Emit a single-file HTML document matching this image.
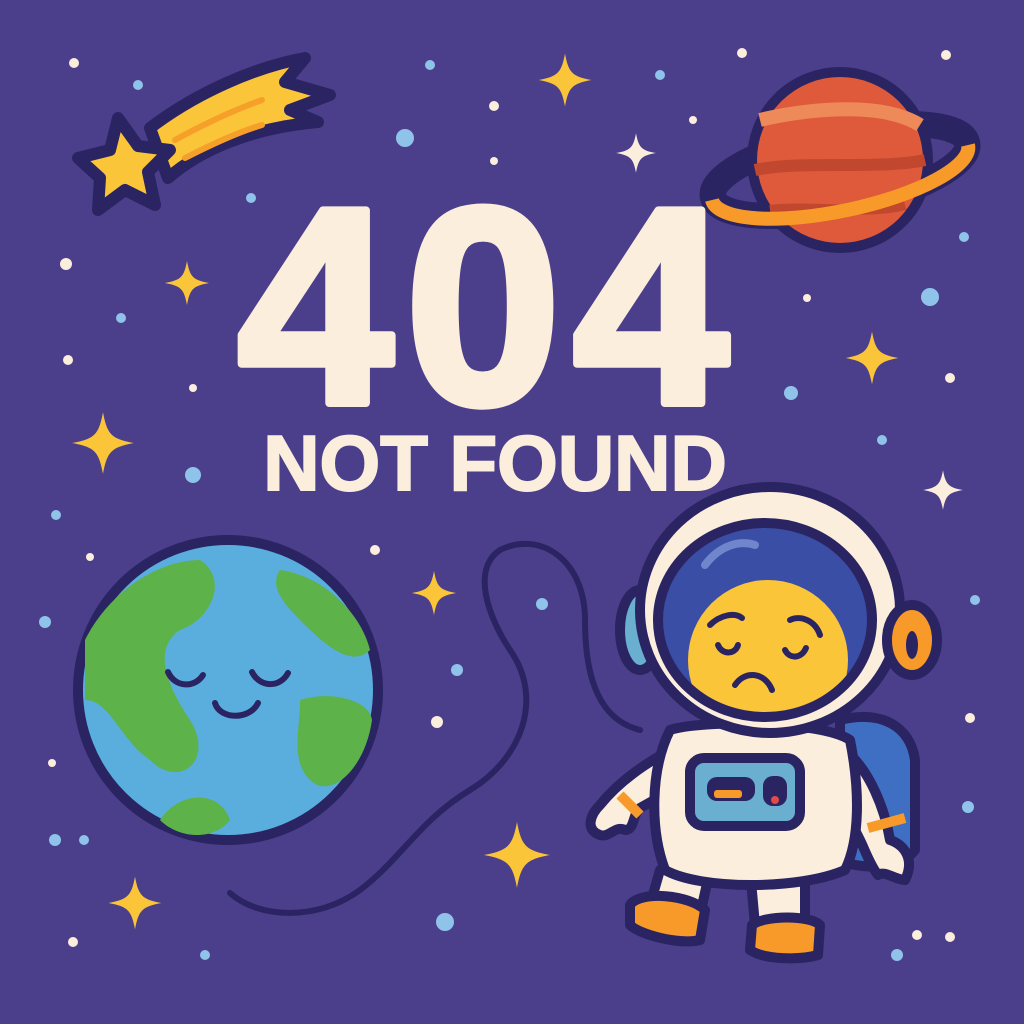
<!DOCTYPE html>
<html><head><meta charset="utf-8"><style>
html,body{margin:0;padding:0;background:#4b3f8b;}
svg{display:block}
</style></head><body>
<svg width="1024" height="1024" viewBox="0 0 1024 1024" xmlns="http://www.w3.org/2000/svg">
<defs>
<path id="sp" d="M0,-22 C3,-6 6,-3 22,0 C6,3 3,6 0,22 C-3,6 -6,3 -22,0 C-6,-3 -3,-6 0,-22Z"/>
</defs>
<rect width="1024" height="1024" fill="#4b3f8b"/>
<g fill="#8fc3ea">
<circle cx="138" cy="85" r="5"/><circle cx="430" cy="65" r="5"/><circle cx="405" cy="138" r="9"/><circle cx="660" cy="75" r="5"/>
<circle cx="251" cy="198" r="5"/><circle cx="121" cy="318" r="5"/><circle cx="930" cy="297" r="9"/><circle cx="964" cy="237" r="5"/>
<circle cx="193" cy="475" r="8"/><circle cx="56" cy="515" r="5"/><circle cx="791" cy="393" r="7"/><circle cx="882" cy="440" r="5"/>
<circle cx="542" cy="604" r="6"/><circle cx="457" cy="670" r="6"/><circle cx="45" cy="622" r="6"/><circle cx="975" cy="600" r="5"/>
<circle cx="55" cy="840" r="6"/><circle cx="968" cy="807" r="6"/><circle cx="445" cy="922" r="9"/><circle cx="897" cy="955" r="6"/><circle cx="205" cy="955" r="5"/>
<circle cx="84" cy="840" r="5"/>
</g>
<g fill="#fbeedd">
<circle cx="74" cy="63" r="5"/><circle cx="494" cy="106" r="5"/><circle cx="742" cy="53" r="5"/><circle cx="946" cy="55" r="5"/>
<circle cx="494" cy="161" r="4"/><circle cx="693" cy="120" r="4"/><circle cx="66" cy="264" r="6"/><circle cx="807" cy="298" r="4"/>
<circle cx="68" cy="360" r="5"/><circle cx="193" cy="388" r="4"/><circle cx="950" cy="378" r="5"/><circle cx="375" cy="550" r="5"/>
<circle cx="90" cy="557" r="4"/><circle cx="437" cy="722" r="6"/><circle cx="52" cy="763" r="4"/><circle cx="970" cy="718" r="5"/>
<circle cx="73" cy="942" r="5"/><circle cx="950" cy="937" r="5"/><circle cx="917" cy="935" r="5"/>
</g>
<g fill="#fbc53a">
<use href="#sp" transform="translate(565,80) scale(1.2)"/>
<use href="#sp" transform="translate(187,283)"/>
<use href="#sp" transform="translate(103,443) scale(1.4)"/>
<use href="#sp" transform="translate(872,358) scale(1.2)"/>
<use href="#sp" transform="translate(434,593)"/>
<use href="#sp" transform="translate(517,855) scale(1.5)"/>
<use href="#sp" transform="translate(135,903) scale(1.2)"/>
</g>
<g fill="#fbeedd">
<use href="#sp" transform="translate(636,153) scale(0.9)"/>
<use href="#sp" transform="translate(943,490) scale(0.9)"/>
</g>
<!-- shooting star -->
<g stroke="#2a2462" stroke-width="12" stroke-linejoin="round">
<path d="M150,128 C200,90 260,66 305,58 L285,82 L330,95 L290,110 L318,122 C250,128 200,150 168,178 Z" fill="#fbc53a"/>
<path d="M118,118 L138,146 L170,150 L148,172 L155,205 L125,190 L98,210 L100,178 L78,158 L110,150 Z" fill="#fbc53a"/>
</g>
<path d="M175,140 C215,118 245,106 262,100" stroke="#f6a02a" stroke-width="6" stroke-linecap="round" fill="none"/>
<path d="M185,158 C220,140 245,130 262,125" stroke="#f6a02a" stroke-width="6" stroke-linecap="round" fill="none"/>
<!-- planet -->
<ellipse cx="840" cy="170" rx="130" ry="38" transform="rotate(-12 840 170)" fill="none" stroke="#2a2462" stroke-width="26"/>
<circle cx="840" cy="160" r="88" fill="#df5a3a" stroke="#2a2462" stroke-width="10"/>
<path d="M760,120 C800,110 880,100 920,125" stroke="#ee8a5a" stroke-width="14" fill="none"/>
<path d="M755,170 C800,160 880,170 925,160" stroke="#c2472f" stroke-width="12" fill="none"/>
<path d="M770,210 C810,205 870,215 905,205" stroke="#c2472f" stroke-width="10" fill="none"/>
<path d="M712,200 A130,38 -12 0 0 968,145" stroke="#f89a2a" stroke-width="14" fill="none"/>
<!-- text -->
<text x="489" y="403" text-anchor="middle" font-family="Liberation Sans, sans-serif" font-weight="bold" font-size="280" letter-spacing="12" fill="#fbeedd" stroke="#fbeedd" stroke-width="8" stroke-linejoin="round">404</text>
<text x="495" y="490" text-anchor="middle" font-family="Liberation Sans, sans-serif" font-weight="bold" font-size="78" fill="#fbeedd" stroke="#fbeedd" stroke-width="2">NOT FOUND</text>
<!-- cord -->
<path d="M640,730 C600,720 585,680 585,620 C585,560 540,530 500,550 C470,570 490,620 510,650 C545,700 520,760 470,790 C420,820 400,860 360,890 C320,920 260,920 230,893" stroke="#2a2462" stroke-width="6" fill="none" stroke-linecap="round"/>
<!-- earth -->
<circle cx="228" cy="690" r="150" fill="#5aaede" stroke="#2a2462" stroke-width="10"/>
<path d="M85,640 C110,590 160,560 200,560 C230,580 210,620 180,630 C150,650 170,690 190,720 C215,760 180,790 150,760 C120,740 110,700 85,700 Z" fill="#5db24a"/>
<path d="M280,570 C320,575 360,610 370,650 C350,670 320,640 300,620 C280,600 270,585 280,570Z" fill="#5db24a"/>
<path d="M300,700 C330,690 370,700 372,720 C365,770 330,800 310,780 C290,760 300,730 300,700Z" fill="#5db24a"/>
<path d="M160,820 C180,790 220,790 230,820 C215,840 180,840 160,820Z" fill="#5db24a"/>
<path d="M85,740 A148,148 0 0 0 370,740 A148,148 0 0 1 85,740Z" fill="#3e86c8" opacity="0.7"/>
<g stroke="#2a2462" stroke-width="6" fill="none" stroke-linecap="round">
<path d="M168,672 C175,688 195,688 203,675"/>
<path d="M252,672 C260,688 280,688 288,673"/>
<path d="M215,703 C220,720 250,720 258,703"/>
</g>
<!-- astronaut -->
<g stroke="#2a2462" stroke-width="10" stroke-linejoin="round">
<path d="M840,720 C880,710 910,725 915,760 L915,850 C900,870 860,870 840,860 Z" fill="#3f6fc2"/>
<ellipse cx="640" cy="630" rx="20" ry="40" fill="#6aaed0"/>
<path d="M660,870 L650,905 L700,915 L710,870Z" fill="#fbeedd"/>
<path d="M750,870 L755,925 L805,925 L805,870Z" fill="#fbeedd"/>
<path d="M630,905 C640,890 690,895 705,910 L700,940 C680,945 640,935 630,925 Z" fill="#f89a2a"/>
<path d="M752,925 C765,915 810,915 820,925 L818,955 C800,960 765,960 750,950 Z" fill="#f89a2a"/>
<path d="M680,745 C650,760 620,780 600,805 C590,815 585,830 600,835 C610,838 615,825 625,830 C635,830 632,815 640,808 L690,780 Z" fill="#fbeedd"/>
<path d="M845,750 C870,770 885,810 890,840 C905,845 915,860 905,880 C895,880 885,870 878,875 C870,865 865,850 860,840 L830,780 Z" fill="#fbeedd"/>
<path d="M670,730 C700,720 820,720 850,740 C860,790 860,840 845,870 C800,890 700,890 665,870 C650,830 650,770 670,730 Z" fill="#fbeedd"/>
<rect x="690" y="758" width="110" height="68" rx="14" fill="#6aaed0"/>
<rect x="707" y="777" width="48" height="24" rx="10" fill="#2a2462" stroke="none"/>
<rect x="763" y="776" width="24" height="30" rx="10" fill="#2a2462" stroke="none"/>
<ellipse cx="770" cy="610" rx="130" ry="123" fill="#fbeedd"/>
<ellipse cx="912" cy="640" rx="25" ry="35" fill="#f89a2a"/>
<ellipse cx="765" cy="620" rx="107" ry="97" fill="#3a4ea6"/>
</g>
<clipPath id="vis"><ellipse cx="765" cy="620" rx="102" ry="92"/></clipPath>
<circle cx="768" cy="660" r="80" fill="#fbc53a" clip-path="url(#vis)"/>
<ellipse cx="912" cy="645" rx="6" ry="14" fill="#2a2462"/>
<rect x="714" y="790" width="28" height="8" rx="3" fill="#f89a2a"/>
<circle cx="775" cy="800" r="4" fill="#e24a4a"/>
<path d="M620,795 L640,815" stroke="#f89a2a" stroke-width="10"/>
<path d="M868,828 L905,818" stroke="#f89a2a" stroke-width="10"/>
<path d="M705,565 C720,545 740,540 755,545" stroke="#6f86cc" stroke-width="8" fill="none" stroke-linecap="round"/>
<g stroke="#2a2462" stroke-width="6" fill="none" stroke-linecap="round">
<path d="M710,625 C720,615 735,612 742,618"/>
<path d="M790,620 C800,615 815,620 820,635"/>
<path d="M718,645 C722,655 735,655 738,645"/>
<path d="M785,650 C790,660 802,658 806,648"/>
<path d="M735,685 C745,670 765,672 772,690"/>
</g>
</svg>
</body></html>
